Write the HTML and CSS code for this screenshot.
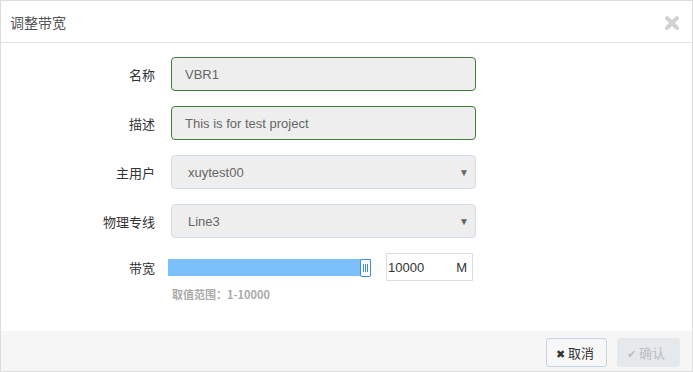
FILE: index.html
```html
<!DOCTYPE html>
<html lang="zh">
<head>
  <meta charset="UTF-8">
  <title>调整带宽</title>
  <link rel="stylesheet" href="styles.css">
</head>
<body>
  <div class="modal">
    <div class="modal-header">
      <span class="modal-title">调整带宽</span>
      <svg class="close" width="16" height="16" viewBox="0 0 16 16">
        <path d="M3 3 L13 13 M13 3 L3 13" stroke="#d2d2d2" stroke-width="4" stroke-linecap="round"/>
      </svg>
    </div>
    <div class="modal-body">
      <div class="form-row">
        <label class="form-label">名称</label>
        <div class="form-field valid">VBR1</div>
      </div>
      <div class="form-row">
        <label class="form-label">描述</label>
        <div class="form-field valid">This is for test project</div>
      </div>
      <div class="form-row">
        <label class="form-label">主用户</label>
        <div class="form-field select">xuytest00<span class="caret">&#9660;</span></div>
      </div>
      <div class="form-row">
        <label class="form-label">物理专线</label>
        <div class="form-field select">Line3<span class="caret">&#9660;</span></div>
      </div>
      <div class="form-row slider-row">
        <label class="form-label">带宽</label>
        <div class="slider">
          <div class="slider-fill"></div>
          <div class="slider-handle"><i></i><i></i><i></i></div>
        </div>
        <div class="num-box"><span>10000</span><span>M</span></div>
      </div>
      <div class="hint">取值范围：1-10000</div>
    </div>
    <div class="modal-footer">
      <button class="btn btn-cancel"><span class="ico">&#10006;</span>取消</button>
      <button class="btn btn-ok"><span class="ico">&#10004;</span>确认</button>
    </div>
  </div>
</body>
</html>
```

FILE: styles.css
```css
* {
  box-sizing: border-box;
}
body {
  margin: 0;
  font-family: "Liberation Sans", "Noto Sans CJK SC", sans-serif;
  background: #fff;
}
.modal {
  width: 693px;
  height: 372px;
  border: 1px solid #ddd;
  display: flex;
  flex-direction: column;
}
.modal-header {
  height: 42px;
  border-bottom: 1px solid #e2e2e2;
  display: flex;
  align-items: center;
  justify-content: space-between;
  padding: 0 12px 0 9px;
}
.modal-title {
  font-family: "Noto Sans CJK SC", sans-serif;
  font-size: 14px;
  color: #555;
}
.close {
  margin-top: 2px;
}
.modal-body {
  flex: 1;
  padding-top: 14px;
}
.form-row {
  display: flex;
  align-items: center;
  margin-bottom: 15px;
}
.form-label {
  width: 154px;
  text-align: right;
  margin-right: 16px;
  font-family: "Noto Sans CJK SC", sans-serif;
  font-size: 13px;
  color: #333;
}
.form-field {
  width: 305px;
  height: 34px;
  border-radius: 4px;
  background: #eee;
  padding: 0 13px;
  display: flex;
  align-items: center;
  font-size: 13px;
  color: #666;
}
.form-field.valid {
  border: 1px solid #3f7f3a;
}
.form-field.select {
  border: 1px solid #d3dde8;
  justify-content: space-between;
  padding: 0 6px 0 16px;
}
.caret {
  font-size: 10px;
  color: #666;
}
.slider-row {
  margin-bottom: 0;
  height: 28px;
}
.slider-row .form-label {
  margin-right: 13px;
}
.slider {
  position: relative;
  width: 203px;
  height: 17px;
  margin-right: 15px;
}
.slider-fill {
  height: 100%;
  background: #7cc0fb;
}
.slider-handle {
  position: absolute;
  right: 0;
  top: 0;
  width: 11px;
  height: 18px;
  background: #fff;
  border: 1px solid #3a8fe6;
  border-radius: 2px;
  display: flex;
  justify-content: center;
  align-items: center;
  gap: 1px;
}
.slider-handle i {
  width: 1px;
  height: 8px;
  background: #3a8fe6;
}
.num-box {
  width: 87px;
  height: 28px;
  border: 1px solid #ddd;
  display: flex;
  align-items: center;
  justify-content: space-between;
  padding: 0 5px 0 1px;
  font-size: 13px;
  color: #333;
}
.hint {
  margin: 5px 0 0 171px;
  font-family: "Noto Sans CJK SC", sans-serif;
  font-size: 11px;
  font-weight: bold;
  color: #aaa;
}
.modal-footer {
  height: 40px;
  background: #f6f6f6;
  display: flex;
  justify-content: flex-end;
  align-items: flex-start;
  gap: 10px;
  padding: 7px 12px 0 0;
}
.btn {
  height: 29px;
  border-radius: 3px;
  font-family: "Noto Sans CJK SC", sans-serif;
  font-size: 13px;
  padding: 0 9px;
  display: flex;
  align-items: center;
  gap: 3px;
}
.btn .ico {
  font-size: 11px;
}
.btn-cancel {
  width: 61px;
  background: #f7f7f7;
  border: 1px solid #c8d4e0;
  color: #333;
}
.btn-ok {
  width: 63px;
  background: #e6e9ec;
  border: 1px solid #e6e9ec;
  color: #b8bdc3;
}
```
